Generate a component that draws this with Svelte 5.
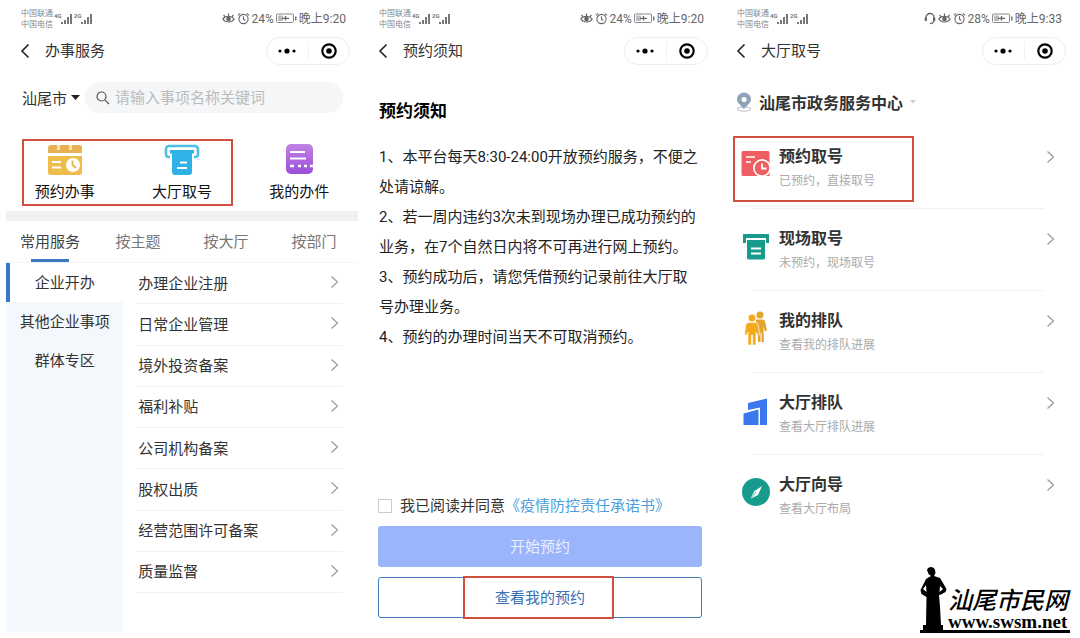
<script lang="ts">
    let keyword: string = "";
    let agreed: boolean = false;
    let activeTab: string = "常用服务";
    let activeGroup: string = "企业开办";

    const tabs = ["常用服务", "按主题", "按大厅", "按部门"];
    const groups = ["企业开办", "其他企业事项", "群体专区"];
    const services = [
        "办理企业注册",
        "日常企业管理",
        "境外投资备案",
        "福利补贴",
        "公司机构备案",
        "股权出质",
        "经营范围许可备案",
        "质量监督",
    ];
    const rules = [
        "1、本平台每天8:30-24:00开放预约服务，不便之处请谅解。",
        "2、若一周内违约3次未到现场办理已成功预约的业务，在7个自然日内将不可再进行网上预约。",
        "3、预约成功后，请您凭借预约记录前往大厅取号办理业务。",
        "4、预约的办理时间当天不可取消预约。",
    ];
    const entries = [
        { icon: "booked", title: "预约取号", note: "已预约，直接取号", marked: true },
        { icon: "printer", title: "现场取号", note: "未预约，现场取号" },
        { icon: "people", title: "我的排队", note: "查看我的排队进展" },
        { icon: "hall", title: "大厅排队", note: "查看大厅排队进展" },
        { icon: "compass", title: "大厅向导", note: "查看大厅布局" },
    ];
</script>

{#snippet signal(label: string)}
    <svg width="20" height="14" viewBox="0 0 20 14" fill="#777">
        <text x="1" y="6" font-size="6" font-weight="700">{label}</text>
        <rect x="8" y="10" width="2" height="2" />
        <rect x="11" y="8" width="2" height="4" />
        <rect x="14" y="5" width="2" height="7" />
        <rect x="17" y="2" width="2" height="10" />
    </svg>
{/snippet}

{#snippet arrow()}
    <svg class="arrow" width="9" height="14" viewBox="0 0 9 14">
        <path d="M1.5 1.5 7.5 7l-6 5.500" fill="none" stroke="#999" stroke-width="1.2" />
    </svg>
{/snippet}

{#snippet top(title: string, battery: string, time: string, headset: boolean)}
    <div class="status">
        <div class="carriers">
            <span>中国联通</span>
            <span>中国电信</span>
        </div>
        <div class="signals">
            {@render signal("4G")}
            {@render signal("2G")}
        </div>
        <div class="state">
            {#if headset}
                <svg width="12" height="13" viewBox="0 0 12 13" fill="none" stroke="#666" stroke-width="1.3">
                    <path d="M2 8V5.500a4 4 0 0 1 8 0V8c0 2-1.500 3.500-4 3.500" />
                    <path d="M1.800 5.500v3.500M10.200 5.500v3.500" stroke-width="2.200" />
                </svg>
            {/if}
            <svg width="13" height="13" viewBox="0 0 13 13" fill="none" stroke="#666" stroke-width="1.2">
                <path d="M.8 7C3.500 3.500 9.500 3.500 12.200 7 9.500 11 3.500 11 .8 7z" />
                <circle cx="6.500" cy="7" r="1.700" fill="#666" />
                <path d="M6.500 4V1.500M3 4.800 1.600 2.800M10 4.800l1.400-2" />
            </svg>
            <svg width="13" height="13" viewBox="0 0 13 13" fill="none" stroke="#666" stroke-width="1.1">
                <circle cx="6.500" cy="7" r="4.600" />
                <path d="M6.500 4.300V7.200l1.800 1.300M1 3.300 3.200 1.300M12 3.300 9.800 1.300" />
            </svg>
            <span>{battery}</span>
            <svg width="21" height="11" viewBox="0 0 21 11">
                <rect x="0.5" y="1" width="17" height="8.500" rx="1" fill="none" stroke="#888" />
                <rect x="2" y="2.500" width="5" height="5.500" fill="#bbb" />
                <path d="M6 5.300h7M9.500 3v4.600" stroke="#666" stroke-width="1.3" />
                <rect x="19" y="3.500" width="1.500" height="4" fill="#777" />
            </svg>
            <span>{time}</span>
        </div>
    </div>
    <header>
        <button class="back" aria-label="返回">
            <svg width="10" height="16" viewBox="0 0 10 16">
                <path d="M8.500 1.500 2 8l6.500 6.500" fill="none" stroke="#222" stroke-width="1.6" />
            </svg>
        </button>
        <h1>{title}</h1>
        <div class="capsule">
            <button aria-label="更多">
                <svg width="18" height="6" viewBox="0 0 18 6">
                    <circle cx="2" cy="3" r="1.600" />
                    <circle cx="9" cy="3" r="2.600" />
                    <circle cx="16" cy="3" r="1.600" />
                </svg>
            </button>
            <button aria-label="关闭">
                <svg width="16" height="16" viewBox="0 0 16 16">
                    <circle cx="8" cy="8" r="6.700" fill="none" stroke="#000" stroke-width="2.200" />
                    <circle cx="8" cy="8" r="2.800" />
                </svg>
            </button>
        </div>
    </header>
{/snippet}

<main>
    <section class="phone">
        {@render top("办事服务", "24%", "晚上9:20", false)}
        <div class="search-row">
            <button class="city">
                汕尾市
                <svg width="9" height="5" viewBox="0 0 9 5"><path d="M0 0h9L4.500 5z" fill="#222" /></svg>
            </button>
            <label class="search">
                <svg width="14" height="14" viewBox="0 0 14 14" fill="none" stroke="#555" stroke-width="1.2">
                    <circle cx="5.500" cy="5.500" r="4.500" />
                    <path d="M8.800 8.800 13 13" />
                </svg>
                <input type="text" aria-label="搜索事项" placeholder="请输入事项名称关键词" bind:value={keyword} />
            </label>
        </div>

        <nav class="quick">
            <div class="quick-pair">
                <button>
                    <svg width="36" height="32" viewBox="0 0 36 32">
                        <path d="M3 1h7v5h3V1h9v5h3V1h7a3 3 0 0 1 3 3v5H1V4a3 3 0 0 1 2-3z" fill="#e8b254" />
                        <path d="M10 1h3v5h-3zM22 1h3v5h-3z" fill="#f8e3b4" />
                        <path d="M1 12h34v16a3 3 0 0 1-3 3H4a3 3 0 0 1-3-3z" fill="#efbd4b" />
                        <path d="M5 18h9M5 23.500h9" stroke="#fff" stroke-width="2.200" />
                        <circle cx="26" cy="21" r="7" fill="#fff" />
                        <path d="M25.500 16.500V21l3.500 3" fill="none" stroke="#e9b54e" stroke-width="1.800" />
                    </svg>
                    预约办事
                </button>
                <button>
                    <svg width="36" height="32" viewBox="0 0 36 32">
                        <path
                            d="M6 13H4.500A2.500 2.500 0 0 1 2 10.500V5a3 3 0 0 1 3-3h26a3 3 0 0 1 3 3v5.500a2.500 2.500 0 0 1-2.500 2.500H30"
                            fill="none" stroke="#4dc0e4" stroke-width="2.600" />
                        <path d="M6 6h24v3.500h-2V28a3 3 0 0 1-3 3H11a3 3 0 0 1-3-3V9.500H6z" fill="#2fb3e6" />
                        <path d="M16 18.500h7M13 24h10" stroke="#fff" stroke-width="2" />
                    </svg>
                    大厅取号
                </button>
            </div>
            <button>
                <svg width="36" height="32" viewBox="0 0 36 32">
                    <defs>
                        <linearGradient id="violet" x1="0" y1="0" x2="0" y2="1">
                            <stop offset="0" stop-color="#c183e4" />
                            <stop offset="1" stop-color="#9c4ed8" />
                        </linearGradient>
                    </defs>
                    <rect x="5" y="0" width="27" height="30" rx="5" fill="url(#violet)" />
                    <path d="M9 8h15M9 14.500h16" stroke="#fff" stroke-width="2" />
                    <path d="M9 22h4M17 22h3M23 22h3M29 22h3" stroke="#fff" stroke-width="2.400" />
                </svg>
                我的办件
            </button>
        </nav>

        <div class="tabs">
            {#each tabs as tab}
                <button class:active={tab === activeTab} on:click={() => (activeTab = tab)}>{tab}</button>
            {/each}
        </div>

        <div class="catalog">
            <div class="groups">
                {#each groups as group}
                    <button class:active={group === activeGroup} on:click={() => (activeGroup = group)}>
                        {group}
                    </button>
                {/each}
            </div>
            <div class="services">
                {#each services as service}
                    <button>
                        <span>{service}</span>
                        {@render arrow()}
                    </button>
                {/each}
            </div>
        </div>
    </section>

    <section class="phone notice">
        {@render top("预约须知", "24%", "晚上9:20", false)}
        <div class="notice-body">
            <h2>预约须知</h2>
            {#each rules as rule}
                <p>{rule}</p>
            {/each}
            <div class="consent">
                <input type="checkbox" id="agree" bind:checked={agreed} />
                <label for="agree">我已阅读并同意</label>
                <a href="#pledge">《疫情防控责任承诺书》</a>
            </div>
            <button class="start">开始预约</button>
            <button class="mine">查看我的预约</button>
        </div>
    </section>

    <section class="phone">
        {@render top("大厅取号", "28%", "晚上9:33", true)}
        <button class="center">
            <svg width="16" height="20" viewBox="0 0 16 20">
                <ellipse cx="8" cy="17" rx="6.500" ry="2.200" fill="none" stroke="#c5ccd3" stroke-width="1.2" />
                <path d="M8 17C4 12.500 1 10.500 1 7.500a7 7 0 0 1 14 0c0 3-3 5-7 9.500z" fill="#8ea3b8" />
                <circle cx="8" cy="7.500" r="2.500" fill="#fff" />
            </svg>
            <strong>汕尾市政务服务中心</strong>
            <svg width="6" height="4" viewBox="0 0 6 4"><path d="M0 0h6L3 3.500z" fill="#ccc" /></svg>
        </button>
        <ul>
            {#each entries as entry}
                <li>
                    <button class="entry" class:marked={entry.marked}>
                        <svg class="entry-icon" width="30" height="34" viewBox="0 0 30 34">
                            {#if entry.icon === "booked"}
                                <path d="M2 4h25a1.500 1.500 0 0 1 1.500 1.500V29H2a1.500 1.500 0 0 1-1.500-1.500v-22A1.500 1.500 0 0 1 2 4z" fill="#ee5e62" />
                                <path d="M5 10h9M5 15h5" stroke="#fff" stroke-width="1.600" />
                                <circle cx="21" cy="21" r="9" fill="#fff" />
                                <circle cx="21" cy="21" r="7.300" fill="#ee5e62" />
                                <path d="M21 16.500V21.500h4.500" fill="none" stroke="#fff" stroke-width="1.800" />
                            {:else if entry.icon === "printer"}
                                <path d="M2 5h26v9h-3V9H5v5H2z" fill="#179b8c" />
                                <path d="M6 11h18v18a1.500 1.500 0 0 1-1.500 1.500h-15A1.500 1.500 0 0 1 6 29z" fill="#179b8c" />
                                <path d="M10 19.500h10M10 24.500h10" stroke="#fff" stroke-width="1.800" />
                            {:else if entry.icon === "people"}
                                <g fill="#e2a52f">
                                    <circle cx="19" cy="4" r="3.500" />
                                    <path d="M15 8.500h6c2 0 3 1 3.300 3l1.700 8-2.200.8-1.500-5L23 31h-2.500v-9h-1v9h-2.500V18L15 11z" />
                                </g>
                                <g fill="#f5aa1c" stroke="#fff" stroke-width=".7">
                                    <circle cx="11" cy="7" r="3.900" />
                                    <path d="M8 11.500h6c2 0 3 1 3.300 3l1.200 9-2.500.8-1-3V34h-3.500V24h-1v10H7V21.300l-1 3-2.500-.8 1.200-9c.3-2 1.300-3 3.300-3z" />
                                </g>
                            {:else if entry.icon === "hall"}
                                <path d="M7 10 26 5.500V32h-7V14.500L7 17z" fill="#3b77ee" />
                                <path d="M2.500 20.500 17.500 16.500V32h-15z" fill="#3b77ee" />
                            {:else}
                                <circle cx="15" cy="17" r="14" fill="#179b8c" />
                                <path d="M21 11 17 20l-8 4 4.500-8z" fill="#fff" />
                                <path d="m9 24 6-7" stroke="#179b8c" stroke-width=".8" />
                            {/if}
                        </svg>
                        <span class="entry-text">
                            <strong>{entry.title}</strong>
                            <small>{entry.note}</small>
                        </span>
                        {@render arrow()}
                    </button>
                </li>
            {/each}
        </ul>
    </section>

    <div class="watermark">
        <svg width="28" height="63" viewBox="0 0 28 63">
            <path
                d="M7 3c1-4 7-4 8 0l.5 3-1.500 3 6 2 3 5 3.500 6-1 3-4.500 2.500-2 .5 1 12 1 18h2v5H3v-5h3l.5-28-5-3-1-4L4 16l2-4 5-3-2.500-2zM6 18l-3 4 3.500 3zM20 19l-.5 6 3.500-3z"
                fill-rule="evenodd" />
        </svg>
        <div class="brand">
            <span class="brand-name">汕尾市民网</span>
            <span class="brand-url">www.swsm.net</span>
        </div>
    </div>
</main>

<style>
    :global(body) {
        background: #fff;
    }

    main {
        position: relative;
        display: grid;
        grid-template-columns: repeat(3, minmax(0, 1fr));
        gap: 6px;
        min-height: 100vh;
        padding: 0 6px;
        box-sizing: border-box;
        font-family: Roboto, "Noto Sans CJK SC", sans-serif;
        font-size: 15px;
        color: #333;
    }

    button {
        font: inherit;
        color: inherit;
        background: none;
        border: none;
        padding: 0;
        cursor: pointer;
    }

    svg {
        flex: none;
        display: block;
    }

    .phone {
        display: flex;
        flex-direction: column;
    }

    .status {
        display: flex;
        align-items: center;
        height: 30px;
        padding: 7px 12px 0 15px;
        box-sizing: border-box;
        color: #666;
    }

    .carriers {
        display: flex;
        flex-direction: column;
        font-size: 8px;
        line-height: 11px;
        color: #888;
    }

    .signals {
        display: flex;
    }

    .state {
        display: flex;
        align-items: center;
        gap: 2px;
        margin-left: auto;
        font-size: 12px;
        line-height: 16px;
    }

    header {
        display: flex;
        align-items: center;
        height: 42px;
        padding: 0 8px 0 14px;
    }

    .back {
        width: 25px;
    }

    h1 {
        flex: 1;
        margin: 0;
        font-size: 15px;
        font-weight: 400;
        line-height: 22px;
    }

    .capsule {
        display: flex;
        width: 84px;
        height: 28px;
        box-sizing: border-box;
        border: 1px solid #eee;
        border-radius: 14px;
    }

    .capsule button {
        flex: 1;
        display: flex;
        align-items: center;
        justify-content: center;
    }

    .capsule button + button {
        border-left: 1px solid #f2f2f2;
        margin: 4px 0;
    }

    .search-row {
        display: flex;
        gap: 5px;
        margin: 10px 15px 0 16px;
    }

    .city {
        display: flex;
        align-items: center;
        gap: 4px;
    }

    .search {
        flex: 1;
        display: flex;
        align-items: center;
        gap: 5px;
        min-width: 0;
        height: 31px;
        padding: 0 11px;
        border-radius: 16px;
        background: #f5f6f8;
    }

    .search input {
        flex: 1;
        min-width: 0;
        padding: 0;
        border: none;
        outline: none;
        background: none;
        font: inherit;
    }

    .search input::placeholder {
        color: #bbb;
    }

    .quick {
        display: grid;
        grid-template-columns: 2fr 1fr;
        margin: 26px 0 5px;
        color: #111;
    }

    .quick-pair {
        position: relative;
        display: grid;
        grid-template-columns: 1fr 1fr;
    }

    .quick-pair::after {
        content: "";
        position: absolute;
        inset: 0 8px 0 16px;
        border: 2px solid #d0503f;
        pointer-events: none;
    }

    .quick button {
        display: flex;
        flex-direction: column;
        align-items: center;
        gap: 5px;
        padding: 5px 0 3px;
        line-height: 22px;
    }

    .tabs {
        display: grid;
        grid-template-columns: repeat(4, 1fr);
        border-top: 10px solid #f2f2f2;
        border-bottom: 1px solid #f4f4f4;
        color: #777;
    }

    .tabs button {
        position: relative;
        height: 41px;
        padding-bottom: 3px;
    }

    .tabs .active {
        color: #444;
    }

    .tabs .active::after {
        content: "";
        position: absolute;
        left: 50%;
        bottom: 0;
        width: 38px;
        height: 3px;
        margin-left: -19px;
        background: #3c78bd;
    }

    .catalog {
        flex: 1;
        display: grid;
        grid-template-columns: 1fr 2fr;
        margin-bottom: 6px;
    }

    .groups {
        display: flex;
        flex-direction: column;
        background: #f4f7fb;
    }

    .groups button {
        height: 39px;
        border-left: 4px solid transparent;
        padding: 0 4px 3px 0;
        white-space: nowrap;
    }

    .groups .active {
        border-color: #3478c6;
        background: #fff;
    }

    .services {
        display: grid;
        grid-auto-rows: 1fr;
        padding: 0 15px 39px 13px;
    }

    .services button {
        display: flex;
        align-items: center;
        justify-content: space-between;
        border-bottom: 1px solid #f2f2f2;
        padding: 0 4px 2px 2px;
    }

    .notice-body {
        flex: 1;
        display: flex;
        flex-direction: column;
        padding: 26px 14px 20px;
    }

    h2 {
        margin: 0 0 18px 1px;
        font-size: 17px;
        line-height: 26px;
        color: #000;
    }

    p {
        margin: 0 4px 0 1px;
        line-height: 30px;
        color: #222;
    }

    .consent {
        display: flex;
        align-items: center;
        height: 20px;
        margin: auto 0 10px;
    }

    .consent input {
        appearance: none;
        width: 14px;
        height: 14px;
        margin: 0 8px 0 0;
        border: 1px solid #ccc;
    }

    .consent input:checked {
        background: #9bb5fa;
    }

    .consent label,
    .consent a {
        padding-bottom: 3px;
    }

    .consent a {
        color: #4b9fdc;
        text-decoration: none;
    }

    .start,
    .mine {
        height: 41px;
        padding-bottom: 3px;
        border-radius: 3px;
    }

    .start {
        margin-bottom: 10px;
        background: #9ab5fb;
        color: #e9effe;
    }

    .mine {
        position: relative;
        border: 1px solid #4480bd;
        color: #3a6fb5;
    }

    .mine::after {
        content: "";
        position: absolute;
        inset: -2px 27% -2px 26%;
        border: 2px solid #d0503f;
        pointer-events: none;
    }

    .center {
        display: flex;
        align-items: center;
        gap: 7px;
        height: 24px;
        margin: 18px 14px 12px;
        font-size: 16px;
    }

    ul {
        margin: 0;
        padding: 0;
        list-style: none;
    }

    li {
        position: relative;
    }

    li + li::before {
        content: "";
        position: absolute;
        top: 0;
        left: 30px;
        right: 30px;
        border-top: 1px solid #f2f2f2;
    }

    .entry {
        position: relative;
        display: flex;
        align-items: flex-start;
        gap: 8px;
        width: 100%;
        padding: 20px 19px 18px;
        text-align: left;
    }

    .entry-icon {
        margin-top: 1px;
    }

    .entry-text {
        flex: 1;
        display: flex;
        flex-direction: column;
        gap: 4px;
    }

    .entry-text strong {
        font-size: 16px;
        line-height: 22px;
    }

    .entry-text small {
        font-size: 12px;
        line-height: 18px;
        color: #aaa;
    }

    .entry .arrow {
        margin-top: 4px;
    }

    .marked::after {
        content: "";
        position: absolute;
        inset: 10px 160px 6px 11px;
        border: 2px solid #d0503f;
    }

    .watermark {
        position: absolute;
        right: 10px;
        bottom: 5px;
        display: flex;
        align-items: flex-end;
        border-bottom: 3px solid #000;
        color: #000;
    }

    .brand {
        display: flex;
        flex-direction: column;
        padding-right: 2px;
    }

    .brand-name {
        font-size: 24px;
        font-style: italic;
        font-weight: 500;
        line-height: 26px;
    }

    .brand-url {
        font-family: "Liberation Serif", serif;
        font-size: 19px;
        font-weight: 700;
        line-height: 16px;
    }
</style>
